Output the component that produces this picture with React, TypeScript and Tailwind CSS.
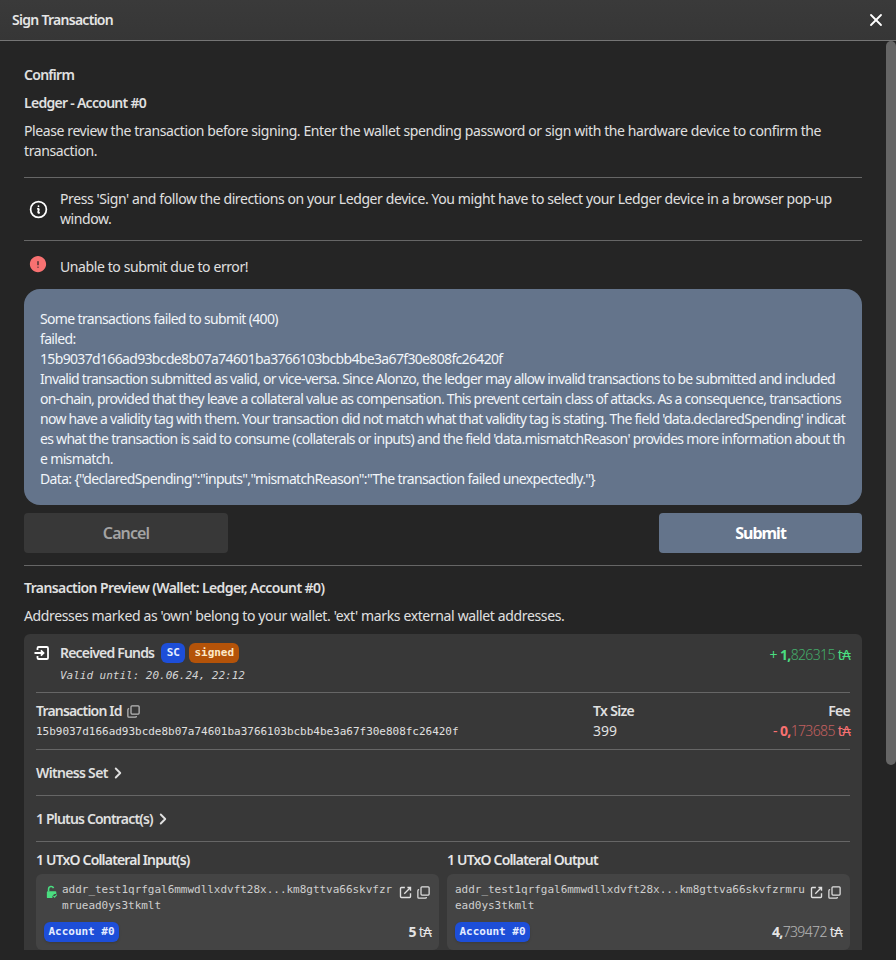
import { ChevronRight, X } from 'lucide-react';
import { HiExclamationCircle, HiOutlineInformationCircle } from 'react-icons/hi2';
import { ReactNode } from 'react';

const mono = "font-['DejaVu_Sans_Mono',monospace] tracking-[-0.02px]";
const heading = 'text-sm font-semibold leading-5';
const tight = 'text-sm font-semibold leading-5 tracking-[-0.82px]';

const CopyIcon = ({ className = '' }: { className?: string }) => (
  <svg viewBox="0 0 24 24" fill="none" stroke="currentColor" strokeWidth="2" className={className}>
    <rect x="8" y="3" width="13" height="13" rx="1.5" />
    <path d="M5 7.5H4.5A1.5 1.5 0 0 0 3 9v10.5A1.5 1.5 0 0 0 4.5 21H15a1.5 1.5 0 0 0 1.5-1.5V19" />
  </svg>
);

const ExternalIcon = () => (
  <svg viewBox="0 0 24 24" fill="none" stroke="currentColor" strokeWidth="2.2" className="w-[15px] h-[15px]">
    <path d="M11 4H5.5A1.5 1.5 0 0 0 4 5.5v13A1.5 1.5 0 0 0 5.5 20h13a1.5 1.5 0 0 0 1.5-1.5V13" />
    <path d="M10 14 20 4M15 4h5v5" />
  </svg>
);

const ReceivedIcon = () => (
  <svg viewBox="0 0 24 24" fill="none" stroke="currentColor" strokeWidth="2.4" className="w-[18px] h-[18px] -ml-[3px] mr-[9px] text-white">
    <path d="M6 8V5.5A1.5 1.5 0 0 1 7.5 4h11A1.5 1.5 0 0 1 20 5.5v13a1.5 1.5 0 0 1-1.5 1.5h-11A1.5 1.5 0 0 1 6 18.5V16" />
    <path d="M2 12h12M10.5 8.5 14 12l-3.5 3.5" />
  </svg>
);

const LockIcon = () => (
  <svg viewBox="0 0 14 16" className="w-[12px] h-[14px] text-[#4ade80]" fill="currentColor">
    <path d="M1 7h10a1 1 0 0 1 1 1v2.4A3.6 3.6 0 0 0 7.6 15H2a1 1 0 0 1-1-1V8a1 1 0 0 1 1-1z" />
    <path d="M3 7V4.5a3 3 0 0 1 5.8-1" fill="none" stroke="currentColor" strokeWidth="1.8" />
    <path d="M8.6 12.6l1.4 1.4 2.6-2.8" fill="none" stroke="currentColor" strokeWidth="1.3" />
  </svg>
);

const Divider = () => <div className="h-px bg-[#666]" />;

const Amount = ({ sign, whole, frac, color }: { sign?: string; whole: string; frac?: string; color?: string }) => (
  <span className={`text-sm whitespace-nowrap tracking-[-0.65px] ${color ?? 'text-[#e5e5e5]'}`}>
    {sign && <span>{sign} </span>}
    <span className="font-bold">{whole}</span>
    {frac && <span className="font-light opacity-70">{frac}</span>}
    <span> t₳</span>
  </span>
);

const AccountBadge = () => (
  <span className={`${mono} inline-flex items-center h-5 px-[4.5px] rounded-md bg-[#1d4ed8] text-[#e5edff] text-[11px] font-bold shadow-sm`}>
    Account #0
  </span>
);

const UtxoBox = ({ title, address, lock, amount }: { title: string; address: string; lock?: boolean; amount: ReactNode }) => (
  <div className="flex-1 min-w-0">
    <div className={`${tight} text-[#e5e5e5] mb-[4px]`}>{title}</div>
    <div className="bg-[#444] rounded-md px-2 pt-[8px] h-[76px]">
      <div className="flex">
        {lock && (
          <div className="w-[18px] pt-[3px] pl-[2px] shrink-0">
            <LockIcon />
          </div>
        )}
        <div className={`${mono} flex-1 min-w-0 text-[11px] leading-4 text-[#cfcfcf] break-all`}>{address}</div>
        <div className="flex gap-[3px] pt-[3px] pl-[3px] text-[#e0e0e0] shrink-0">
          <ExternalIcon />
          <CopyIcon className="w-[15px] h-[15px]" />
        </div>
      </div>
      <div className="flex items-center justify-between mt-2">
        <AccountBadge />
        {amount}
      </div>
    </div>
  </div>
);

const App = () => {
  return (
    <div className="relative w-[896px] h-[960px] overflow-hidden bg-[#252525] text-[#e0e0e0] font-['Noto_Sans',sans-serif]">
      <header className="h-[41px] flex items-center justify-between pl-3 pr-[10px] bg-gradient-to-b from-[#3a3a3a] to-[#363636] border-b border-[#757575]">
        <span className={`${heading} tracking-[-0.72px] text-[#e5e5e5]`}>Sign Transaction</span>
        <X className="w-5 h-5 text-white" strokeWidth={2.2} />
      </header>

      {/* scrollbar thumb */}
      <div className="absolute right-0 top-[41px] w-[10px] h-[724px] rounded-[5px] bg-[#666]" />

      <main className="pl-6 pr-[34px] pt-[24px] tracking-[-0.4px]">
        <div className={`${heading} tracking-[-0.72px] mb-2`}>Confirm</div>
        <div className={`${heading} tracking-[-0.72px] mb-2`}>Ledger - Account #0</div>
        <p className="text-sm leading-5 mb-4">
          Please review the transaction before signing. Enter the wallet spending password or sign with the hardware device to confirm the transaction.
        </p>
        <Divider />
        <div className="flex items-center gap-[11.5px] py-[10px] pl-[3.5px] h-[62px]">
          <HiOutlineInformationCircle className="w-[21px] h-[21px] shrink-0 text-white" strokeWidth={2} />
          <p className="text-sm leading-5">
            Press 'Sign' and follow the directions on your Ledger device. You might have to select your Ledger device in a browser pop-up window.
          </p>
        </div>
        <Divider />
        <div className="flex items-center gap-3 pl-1 h-[48px]">
          <HiExclamationCircle className="w-5 h-5 -mt-[3px] text-[#f87171] shrink-0" />
          <span className="text-sm pt-[4px]">Unable to submit due to error!</span>
        </div>

        <div className="bg-[#64748b] rounded-2xl px-4 pt-[20px] pb-[8px] h-[216px] text-sm leading-5 text-[#f1f5f9] whitespace-nowrap tracking-[-0.66px]">
          <div>Some transactions failed to submit (400)</div>
          <div>failed:</div>
          <div>15b9037d166ad93bcde8b07a74601ba3766103bcbb4be3a67f30e808fc26420f</div>
          <div className="tracking-[-0.75px]">Invalid transaction submitted as valid, or vice-versa. Since Alonzo, the ledger may allow invalid transactions to be submitted and included</div>
          <div className="tracking-[-0.75px]">on-chain, provided that they leave a collateral value as compensation. This prevent certain class of attacks. As a consequence, transactions</div>
          <div className="tracking-[-0.73px]">now have a validity tag with them. Your transaction did not match what that validity tag is stating. The field 'data.declaredSpending' indicat</div>
          <div className="tracking-[-0.71px]">es what the transaction is said to consume (collaterals or inputs) and the field 'data.mismatchReason' provides more information about th</div>
          <div>e mismatch.</div>
          <div>Data: {'{"declaredSpending":"inputs","mismatchReason":"The transaction failed unexpectedly."}'}</div>
        </div>

        <div className="flex justify-between mt-2 mb-3">
          <button className="w-[204px] h-10 rounded bg-[#383838] text-[#a3a3a3] font-semibold text-base tracking-[-0.9px]">Cancel</button>
          <button className="w-[203px] h-10 rounded bg-[#64748b] text-white font-bold text-base tracking-[-1px]">Submit</button>
        </div>
        <Divider />

        <div className={`${heading} tracking-[-0.6px] mt-[12px] mb-2`}>Transaction Preview (Wallet: Ledger, Account #0)</div>
        <p className="text-sm leading-5 mb-2 tracking-[-0.36px]">Addresses marked as 'own' belong to your wallet. 'ext' marks external wallet addresses.</p>

        <section className="bg-[#383838] rounded-t-md px-3 pt-[9px]">
          <div className="flex justify-between h-[49px]">
            <div>
              <div className="flex items-center h-5">
                <ReceivedIcon />
                <span className={tight}>Received Funds</span>
                <span className={`${mono} ml-[7px] inline-flex items-center h-5 px-[5.5px] rounded-md bg-[#1d4ed8] text-[11px] font-bold text-[#e5edff]`}>SC</span>
                <span className={`${mono} ml-[4px] inline-flex items-center h-5 px-[5px] rounded-md bg-[#b45309] text-[11px] font-bold text-[#fde9c8]`}>signed</span>
              </div>
              <div className={`${mono} italic text-[11px] leading-4 mt-[5px] pl-6 text-[#d4d4d4]`}>Valid until: 20.06.24, 22:12</div>
            </div>
            <div className="pt-px leading-5">
              <Amount sign="+" whole="1," frac="826315" color="text-[#4ade80]" />
            </div>
          </div>
          <Divider />

          <div className="flex h-[56px] pt-[8px]">
            <div className="w-[557px]">
              <div className={`flex items-center gap-1 ${tight}`}>
                Transaction Id <CopyIcon className="w-[15px] h-[15px] text-[#b8b8b8]" />
              </div>
              <div className={`${mono} text-[11px] leading-4 mt-[3px] text-[#e0e0e0]`}>15b9037d166ad93bcde8b07a74601ba3766103bcbb4be3a67f30e808fc26420f</div>
            </div>
            <div className="w-[100px]">
              <div className={`${heading} tracking-[-0.68px]`}>Tx Size</div>
              <div className="text-sm leading-5 tracking-normal">399</div>
            </div>
            <div className="flex-1 text-right">
              <div className={`${heading} tracking-[-0.68px]`}>Fee</div>
              <div className="leading-5 -mt-px">
                <Amount sign="-" whole="0," frac="173685" color="text-[#f87171]" />
              </div>
            </div>
          </div>
          <Divider />

          <div className={`flex items-center gap-px h-[45px] ${heading} tracking-[-0.68px]`}>
            Witness Set <ChevronRight className="w-[18px] h-[18px]" strokeWidth={2.5} />
          </div>
          <Divider />
          <div className={`flex items-center gap-px h-[45px] ${tight}`}>
            1 Plutus Contract(s) <ChevronRight className="w-[18px] h-[18px]" strokeWidth={2.5} />
          </div>
          <Divider />

          <div className="flex gap-2 pt-[8px]">
            <UtxoBox title="1 UTxO Collateral Input(s)" lock address="addr_test1qrfgal6mmwdllxdvft28x...km8gttva66skvfzrmruead0ys3tkmlt" amount={<Amount whole="5" />} />
            <UtxoBox title="1 UTxO Collateral Output" address="addr_test1qrfgal6mmwdllxdvft28x...km8gttva66skvfzrmruead0ys3tkmlt" amount={<Amount whole="4," frac="739472" />} />
          </div>
        </section>
      </main>
    </div>
  );
};

export default App;
